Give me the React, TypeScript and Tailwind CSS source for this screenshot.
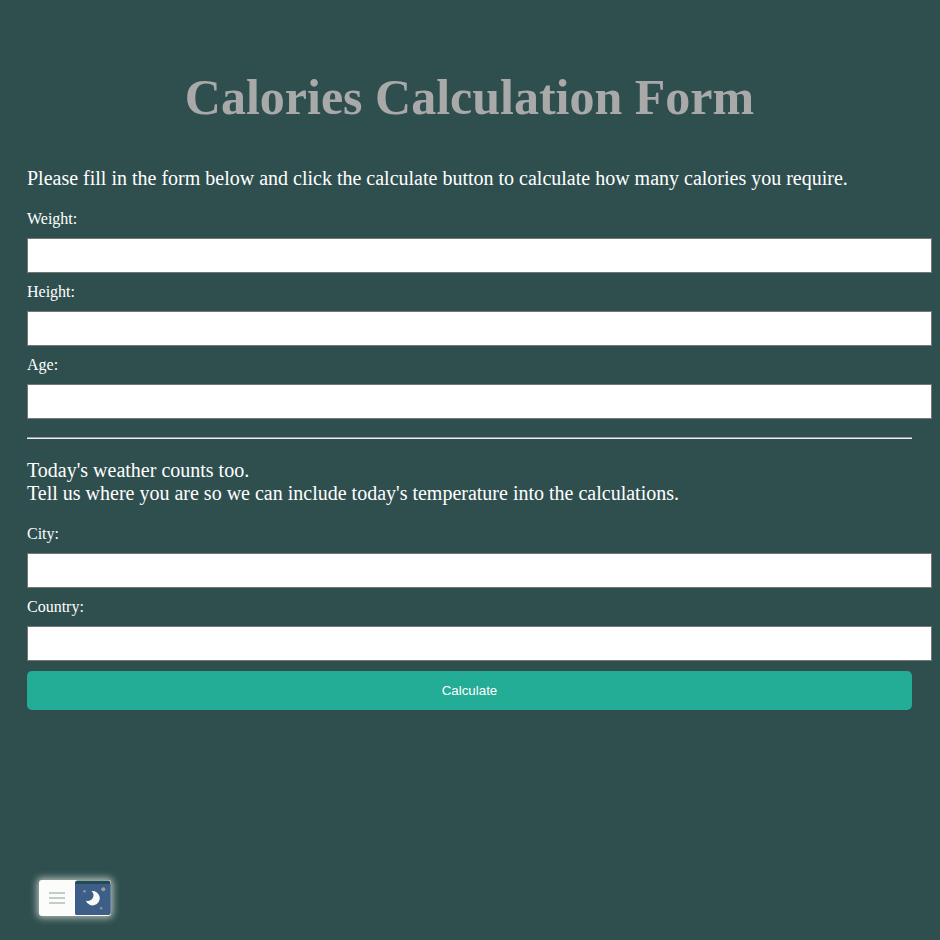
import React from "react";

function Field({ label, id }: { label: string; id: string }) {
  return (
    <div className="h-[73px]">
      <label htmlFor={id} className="block h-[29px] pt-px text-[16px] leading-[18px]">
        {label}
      </label>
      <input
        id={id}
        type="text"
        className="block h-[35px] w-[905px] max-w-none rounded-none border border-[#767676] bg-white px-2 text-black outline-none"
      />
    </div>
  );
}

function ThemeToggle() {
  return (
    <div className="fixed left-[39px] top-[880px] flex h-[36px] w-[72px] overflow-visible rounded-[3px] bg-[#fcfcfa] shadow-[0_0_7px_2px_rgba(235,235,225,0.7)]">
      <div className="flex w-[36px] flex-col items-center justify-center gap-[3px]">
        <span className="h-[2px] w-[16px] bg-[#c0cdc8]" />
        <span className="h-[2px] w-[16px] bg-[#c0cdc8]" />
        <span className="h-[2px] w-[16px] bg-[#c0cdc8]" />
      </div>
      <svg width="36" height="36" viewBox="0 0 36 36" aria-hidden="true">
        <rect x="0" y="0.5" width="35.5" height="34.5" rx="2.5" fill="#234b55" />
        <path d="M0 4H35.5V32.5Q35.5 35 33 35H2.5Q0 35 0 32.5Z" fill="#3c5e87" />
        <path d="M16.3 11.1A7.2 7.2 0 1 1 10.8 20.5A5.5 5.5 0 0 0 16.3 11.1Z" fill="#fafaf7" />
        <circle cx="28.3" cy="9.3" r="2" fill="#9b9fa0" />
        <circle cx="9.5" cy="11.3" r="1.3" fill="#8b969d" />
        <circle cx="26.2" cy="28.2" r="1.3" fill="#8b969d" />
      </svg>
    </div>
  );
}

export default function App() {
  return (
    <main className="h-[940px] w-[940px] overflow-hidden bg-[#2f4f4f] pl-[27px] pr-[28px] pt-[70px] font-['Liberation_Serif',serif] text-white">
      <h1 className="h-[97px] whitespace-nowrap text-center text-[50px] font-bold leading-[55px] text-[#a9a9a9]">
        Calories Calculation Form
      </h1>
      <form onSubmit={(e) => e.preventDefault()}>
        <p className="h-[42px] whitespace-nowrap text-[20px] leading-[23px]">
          Please fill in the form below and click the calculate button to calculate how many calories you require.
        </p>
        <Field label="Weight:" id="weight" />
        <Field label="Height:" id="height" />
        <Field label="Age:" id="age" />
        <hr className="mt-[9px] h-[2px] border-0 border-t border-[#9a9a9a] bg-[#eeeeee]" />
        <p className="mt-[20px] h-[65px] text-[20px] leading-[23px]">
          Today's weather counts too.
          <br />
          Tell us where you are so we can include today's temperature into the calculations.
        </p>
        <Field label="City:" id="city" />
        <Field label="Country:" id="country" />
        <button
          type="submit"
          className="mt-px block h-[39px] w-full rounded-[5px] bg-[#23ac96] text-center font-['Liberation_Sans',sans-serif] text-[13.333px] text-white"
        >
          Calculate
        </button>
      </form>
      <ThemeToggle />
    </main>
  );
}
